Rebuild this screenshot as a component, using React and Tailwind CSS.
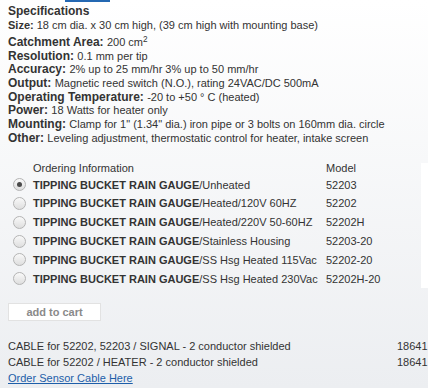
import React from 'react';

const specs = [
    { label: 'Catchment Area:', value: <>200 cm<sup>2</sup></> },
    { label: 'Resolution:', value: '0.1 mm per tip' },
    { label: 'Accuracy:', value: '2% up to 25 mm/hr 3% up to 50 mm/hr' },
    { label: 'Output:', value: 'Magnetic reed switch (N.O.), rating 24VAC/DC 500mA' },
    { label: 'Operating Temperature:', value: '-20 to +50 ° C (heated)' },
    { label: 'Power:', value: '18 Watts for heater only' },
    { label: 'Mounting:', value: 'Clamp for 1" (1.34" dia.) iron pipe or 3 bolts on 160mm dia. circle' },
    { label: 'Other:', value: 'Leveling adjustment, thermostatic control for heater, intake screen' },
];

const products = [
    { option: '/Unheated', model: '52203', checked: true },
    { option: '/Heated/120V 60HZ', model: '52202' },
    { option: '/Heated/220V 50-60HZ', model: '52202H' },
    { option: '/Stainless Housing', model: '52203-20' },
    { option: '/SS Hsg Heated 115Vac', model: '52202-20' },
    { option: '/SS Hsg Heated 230Vac', model: '52202H-20' },
];

const cables = [
    { name: 'CABLE for 52202, 52203 / SIGNAL - 2 conductor shielded', part: '18641' },
    { name: 'CABLE for 52202 / HEATER - 2 conductor shielded', part: '18641' },
];

const Radio = ({ checked }) => (
    <span className="ml-[13px] w-[13px] h-[13px] shrink-0 rounded-full border border-[#b4b4b4] bg-gradient-to-b from-[#f9f9f9] to-[#dedede] flex items-center justify-center">
        {checked && <span className="w-[5px] h-[5px] rounded-full bg-[#4a4a4a]" />}
    </span>
);

export default function App() {
    return (
        <div className="w-[428px] h-[388px] overflow-hidden bg-gradient-to-b from-white to-[#eceef1] font-['Liberation_Sans',Arial,sans-serif] text-[#333]">
            {/* top tab marker */}
            <div className="ml-[65px] w-[45px] h-[2px] bg-[#2468b2]" />

            {/* Specifications */}
            <div className="pl-2 pt-[2px]">
                <div className="text-[12px] font-bold leading-[14px]">Specifications</div>
                <div className="text-[11px] leading-[14px] whitespace-nowrap">
                    <span className="font-bold">Size:</span> 18 cm dia. x 30 cm high, (39 cm high with mounting base)
                </div>
                <div className="mt-1">
                    {specs.map((s) => (
                        <div key={s.label} className="text-[12px] leading-[13.67px] whitespace-nowrap">
                            <span className="font-bold">{s.label}</span>{' '}
                            <span className="text-[11px]">{s.value}</span>
                        </div>
                    ))}
                </div>
            </div>

            {/* Ordering table */}
            <div className="mt-4 flex">
                <div className="w-[421px] text-[11px]">
                    <div className="flex h-[14px] items-center">
                        <span className="ml-[33px] w-[293px]">Ordering Information</span>
                        <span>Model</span>
                    </div>
                    {products.map((p) => (
                        <div key={p.model} className="flex h-[18.8px] items-center whitespace-nowrap">
                            <Radio checked={p.checked} />
                            <span className="ml-[7px] w-[293px]">
                                <span className="font-bold">TIPPING BUCKET RAIN GAUGE</span>
                                {p.option}
                            </span>
                            <span>{p.model}</span>
                        </div>
                    ))}
                </div>
                <div className="w-[7px] mt-[2px] bg-white" />
            </div>

            {/* add to cart */}
            <div className="mt-[15px] ml-2 w-[93px] h-[18px] border border-[#e2e2e2] bg-white flex items-center justify-center text-[11px] font-bold text-[#8a8a8a]">
                add to cart
            </div>

            {/* Cables */}
            <div className="mt-[18px] text-[11px] leading-[15.7px]">
                {cables.map((c) => (
                    <div key={c.name} className="flex whitespace-nowrap">
                        <span className="ml-2 w-[389px]">{c.name}</span>
                        <span>{c.part}</span>
                    </div>
                ))}
                <a href="#" className="ml-2 text-[#1d5ea9] underline">Order Sensor Cable Here</a>
            </div>
        </div>
    );
}
